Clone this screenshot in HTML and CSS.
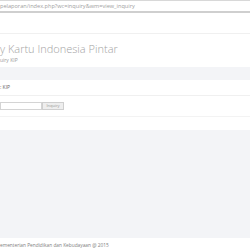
FILE: index.html
```html
<!DOCTYPE html>
<html>
<head>
<meta charset="utf-8">
<link rel="stylesheet" href="styles.css">
</head>
<body>
<div class="urlbar"><span class="url">pelaporan/index.php?wc=inquiry&amp;wm=view_inquiry</span></div>
<div class="topgap"></div>
<div class="header">
  <h1 class="title">y Kartu Indonesia Pintar</h1>
  <div class="crumb">uiry KIP</div>
</div>
<div class="band"></div>
<div class="label">: KIP</div>
<div class="form">
  <input class="field" type="text">
  <button class="btn">Inquiry</button>
</div>
<div class="gap"></div>
<div class="content"></div>
<div class="footer">ementerian Pendidikan dan Kebudayaan @ 2015</div>
</body>
</html>
```
FILE: styles.css
```css
html, body {
  margin: 0;
  padding: 0;
  background: #fff;
  font-family: "Open Sans", sans-serif;
  width: 250px;
  height: 250px;
  overflow: hidden;
}
.urlbar {
  height: 10px;
  border-top: 1px solid #d8d8d8;
  border-bottom: 2px solid #cfcfcf;
  display: flex;
  align-items: center;
}
.url {
  font-size: 5.6px;
  color: #a0a0a0;
  line-height: 10px;
}
.topgap {
  height: 20px;
  border-bottom: 1px solid #f0f0f0;
}
.header {
  padding-top: 8px;
  height: 25px;
  box-sizing: border-box;
}
.title {
  margin: 0;
  font-size: 11px;
  font-weight: 300;
  color: #a3a3a3;
  line-height: 13px;
}
.crumb {
  font-size: 5px;
  color: #999;
  line-height: 7px;
  margin-top: 2px;
}
.band {
  margin-top: 8px;
  height: 13px;
  background: #f3f4f7;
}
.label {
  height: 15px;
  font-size: 5px;
  color: #666;
  line-height: 15px;
  border-bottom: 1px solid #f0f0f0;
}
.form {
  display: flex;
  padding-top: 6px;
  height: 14px;
  box-sizing: border-box;
  align-items: flex-start;
}
.field {
  width: 42px;
  height: 8px;
  box-sizing: border-box;
  border: 1px solid #d4d4d4;
  margin: 0;
  padding: 0;
}
.btn {
  width: 22px;
  height: 8px;
  box-sizing: border-box;
  margin: 0;
  padding: 0;
  border: 1px solid #cfcfcf;
  background: #eeeeee;
  color: #999;
  font-size: 4px;
  font-family: "Open Sans", sans-serif;
  line-height: 6px;
}
.gap {
  height: 6px;
  border-bottom: 1px solid #f3f3f3;
}
.content {
  margin-top: 13px;
  height: 108px;
  background: #f3f4f7;
}
.footer {
  font-size: 4.8px;
  color: #808080;
  line-height: 14px;
  height: 14px;
}
```
